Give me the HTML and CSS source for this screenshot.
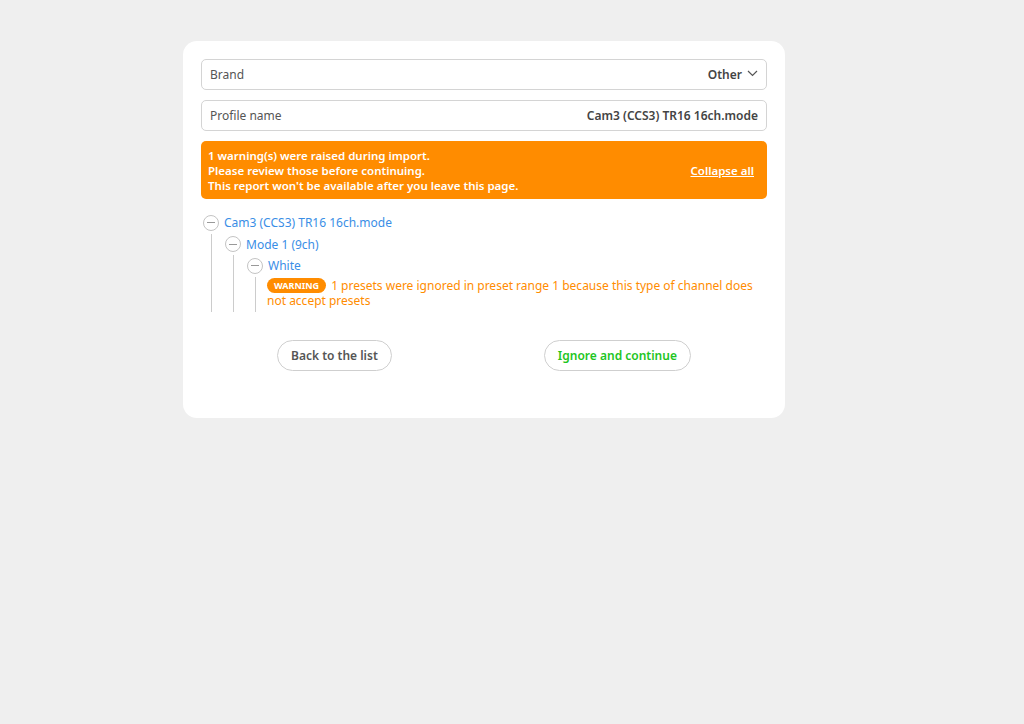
FILE: index.html
```html
<!DOCTYPE html>
<html lang="en">
<head>
<meta charset="utf-8">
<title>Import profile</title>
<link rel="stylesheet" href="styles.css">
</head>
<body>
<div class="card">
  <div class="field">
    <span class="label">Brand</span>
    <span class="value">Other
      <svg class="chev" width="11" height="7" viewBox="0 0 11 7"><path d="M1 1 L5.5 5.5 L10 1" fill="none" stroke="#555" stroke-width="1.2"/></svg>
    </span>
  </div>
  <div class="field">
    <span class="label">Profile name</span>
    <span class="value">Cam3 (CCS3) TR16 16ch.mode</span>
  </div>
  <div class="alert">
    <div class="alert-text">
      <div>1 warning(s) were raised during import.</div>
      <div>Please review those before continuing.</div>
      <div>This report won't be available after you leave this page.</div>
    </div>
    <a class="collapse" href="#">Collapse all</a>
  </div>
  <div class="tree">
    <div class="node">
      <div class="head"><span class="toggle"></span><span class="name">Cam3 (CCS3) TR16 16ch.mode</span></div>
      <div class="children">
        <div class="node">
          <div class="head"><span class="toggle"></span><span class="name">Mode 1 (9ch)</span></div>
          <div class="children">
            <div class="node">
              <div class="head"><span class="toggle"></span><span class="name">White</span></div>
              <div class="children last">
                <div class="warn"><span class="badge">WARNING</span><span class="msg">1 presets were ignored in preset range 1 because this type of channel does not accept presets</span></div>
              </div>
            </div>
          </div>
        </div>
      </div>
    </div>
  </div>
  <div class="actions">
    <button class="btn">Back to the list</button>
    <button class="btn green">Ignore and continue</button>
  </div>
</div>
</body>
</html>
```

FILE: styles.css
```css
html, body {
  margin: 0;
  padding: 0;
  background: #efefef;
  font-family: "Noto Sans", "Open Sans", sans-serif;
  font-size: 12px;
  color: #555;
}
.card {
  box-sizing: border-box;
  width: 602px;
  margin: 41px 0 0 183px;
  padding: 18px 18px 47px 18px;
  background: #fff;
  border-radius: 14px;
}
.field {
  box-sizing: border-box;
  height: 31px;
  border: 1px solid #d4d4d4;
  border-radius: 5px;
  padding: 0 8px;
  display: flex;
  align-items: center;
  justify-content: space-between;
  margin-bottom: 10px;
}
.label { color: #555; }
.value {
  font-weight: 600;
  color: #444;
  display: flex;
  align-items: center;
  gap: 5px;
}
.chev { margin-top: -2px; }
.alert {
  box-sizing: border-box;
  height: 58px;
  background: #ff8c00;
  border-radius: 5px;
  padding: 6px 13px 6px 7px;
  display: flex;
  align-items: center;
  justify-content: space-between;
  color: #fff;
  font-weight: 600;
  font-size: 11.5px;
  line-height: 15px;
}
.collapse {
  color: #fff;
  text-decoration: underline;
  font-weight: 600;
}
.tree {
  margin-top: 13px;
  color: #3a8ee6;
}
.head {
  display: flex;
  align-items: center;
  height: 21.5px;
}
.toggle {
  box-sizing: border-box;
  width: 16px;
  height: 16px;
  border: 1px solid #c4c4c4;
  border-radius: 50%;
  position: relative;
  margin-left: 2px;
  margin-right: 5px;
  flex: none;
}
.toggle::after {
  content: "";
  position: absolute;
  left: 3px;
  right: 3px;
  top: 6.5px;
  height: 1px;
  background: #999;
}
.children {
  margin-left: 10px;
  border-left: 1px solid #ccc;
  padding-left: 11px;
}
.children.last {
  padding-left: 11px;
  padding-bottom: 4px;
}
.warn {
  color: #ff8c00;
  line-height: 15px;
  padding-top: 1px;
  padding-right: 14px;
}
.badge {
  display: inline-block;
  background: #ff8c00;
  color: #fff;
  font-weight: 700;
  font-size: 9px;
  line-height: 15px;
  height: 15px;
  padding: 0 7px;
  margin-right: 5px;
  border-radius: 8px;
  vertical-align: top;
}
.actions {
  display: flex;
  justify-content: space-around;
  margin-top: 28px;
}
.btn {
  box-sizing: border-box;
  height: 31px;
  padding: 0 13px;
  border: 1px solid #cfcfcf;
  border-radius: 16px;
  background: #fff;
  font-family: inherit;
  font-size: 12px;
  font-weight: 600;
  color: #555;
}
.btn.green { color: #1ec51e; }
```
